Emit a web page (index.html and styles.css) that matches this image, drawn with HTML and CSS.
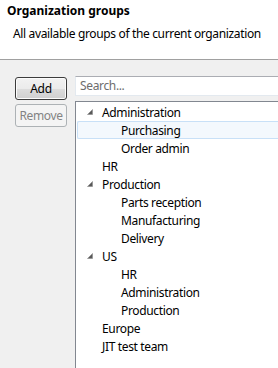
FILE: index.html
```html
<!DOCTYPE html>
<html>
<head>
<meta charset="utf-8">
<link rel="stylesheet" href="styles.css">
</head>
<body>
<div class="page">
  <header class="header">
    <div class="title">Organization groups</div>
    <div class="subtitle">All available groups of the current organization</div>
  </header>
  <main class="main">
    <div class="buttons">
      <button class="btn btn-default">Add</button>
      <button class="btn" disabled>Remove</button>
    </div>
    <div class="content">
      <div class="search">Search...</div>
      <div class="tree">
        <div class="row lvl0"><span class="twisty"><svg width="6" height="6" viewBox="0 0 6 6"><polygon points="5.5,0.5 5.5,5.5 0.5,5.5" fill="#595959" stroke="#8c8c8c" stroke-width="0.6"/></svg></span><span class="label">Administration</span></div>
        <div class="row lvl1 focused"><span class="twisty"></span><span class="label">Purchasing</span></div>
        <div class="row lvl1"><span class="twisty"></span><span class="label">Order admin</span></div>
        <div class="row lvl0"><span class="twisty"></span><span class="label">HR</span></div>
        <div class="row lvl0"><span class="twisty"><svg width="6" height="6" viewBox="0 0 6 6"><polygon points="5.5,0.5 5.5,5.5 0.5,5.5" fill="#595959" stroke="#8c8c8c" stroke-width="0.6"/></svg></span><span class="label">Production</span></div>
        <div class="row lvl1"><span class="twisty"></span><span class="label">Parts reception</span></div>
        <div class="row lvl1"><span class="twisty"></span><span class="label">Manufacturing</span></div>
        <div class="row lvl1"><span class="twisty"></span><span class="label">Delivery</span></div>
        <div class="row lvl0"><span class="twisty"><svg width="6" height="6" viewBox="0 0 6 6"><polygon points="5.5,0.5 5.5,5.5 0.5,5.5" fill="#595959" stroke="#8c8c8c" stroke-width="0.6"/></svg></span><span class="label">US</span></div>
        <div class="row lvl1"><span class="twisty"></span><span class="label">HR</span></div>
        <div class="row lvl1"><span class="twisty"></span><span class="label">Administration</span></div>
        <div class="row lvl1"><span class="twisty"></span><span class="label">Production</span></div>
        <div class="row lvl0"><span class="twisty"></span><span class="label">Europe</span></div>
        <div class="row lvl0"><span class="twisty"></span><span class="label">JIT test team</span></div>
      </div>
    </div>
  </main>
</div>
</body>
</html>
```
FILE: styles.css
```css
html, body {
  margin: 0;
  padding: 0;
}
body {
  width: 278px;
  height: 368px;
  overflow: hidden;
  background: #f0f0f0;
  font-family: "Noto Sans", "Open Sans", sans-serif;
  font-size: 12px;
  letter-spacing: -0.35px;
  color: #000;
}
.page {
  width: 278px;
  height: 368px;
  display: flex;
  flex-direction: column;
}
.header {
  background: #fff;
  border-bottom: 1px solid #a0a0a0;
  box-sizing: border-box;
  height: 60px;
  padding: 2px 0 0 7px;
}
.title {
  font-weight: bold;
  line-height: 17px;
  letter-spacing: 0;
}
.subtitle {
  margin: 6px 0 0 6px;
  line-height: 17px;
}
.main {
  flex: 1;
  display: flex;
  gap: 8px;
  padding: 16px 0 0 15px;
  min-height: 0;
}
.buttons {
  display: flex;
  flex-direction: column;
  gap: 4px;
  padding-top: 1px;
  width: 52px;
  flex: none;
}
.btn {
  height: 23px;
  width: 52px;
  box-sizing: border-box;
  font: inherit;
  letter-spacing: inherit;
  border-radius: 3px;
  border: 1px solid #707070;
  background: linear-gradient(#f2f2f2 0%, #ebebeb 50%, #dddddd 50%, #cfcfcf 100%);
  color: #000;
  padding: 0;
  line-height: 20px;
}
.btn-default {
  border-color: #3c3c3c;
  box-shadow: inset 0 0 0 1px #fcfcfc;
}
.btn:disabled {
  border-color: #adb2b5;
  background: #f4f4f4;
  color: #838383;
}
.content {
  flex: 1;
  min-width: 0;
  display: flex;
  flex-direction: column;
  gap: 5px;
}
.search {
  height: 20px;
  box-sizing: border-box;
  background: #fff;
  border: 1px solid #e3e9ef;
  border-top-color: #abadb3;
  border-right: none;
  color: #6d6d6d;
  padding-left: 4px;
  line-height: 17px;
}
.tree {
  flex: 1;
  background: #fff;
  border-left: 1px solid #828790;
  border-top: 1px solid #828790;
  padding: 1px 0 0 1px;
}
.row {
  display: flex;
  align-items: center;
  height: 18px;
  box-sizing: border-box;
  padding-left: 6px;
}
.lvl1 {
  padding-left: 25px;
}
.twisty {
  width: 19px;
  flex: none;
  display: flex;
  align-items: center;
  padding-left: 4px;
  box-sizing: border-box;
}
.label {
  white-space: nowrap;
  line-height: 16px;
  padding-top: 1px;
}
.focused {
  border: 1px solid #c8e0f7;
  border-right: none;
  border-radius: 2px 0 0 2px;
  background: #f3f8fd;
  padding-left: 24px;
}
```
